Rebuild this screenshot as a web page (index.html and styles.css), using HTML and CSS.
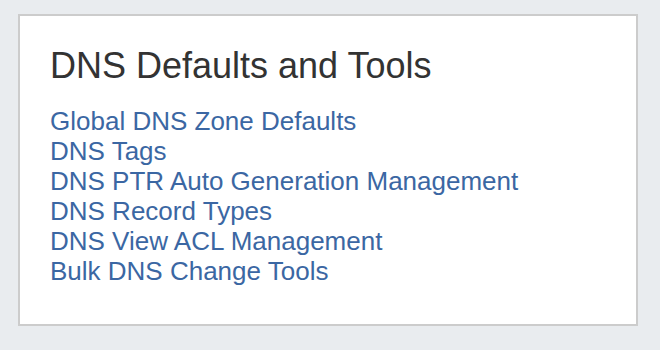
FILE: index.html
```html
<!DOCTYPE html>
<html lang="en">
<head>
    <meta charset="UTF-8" />
    <title>DNS Defaults and Tools</title>
    <link rel="stylesheet" href="styles.css">
</head>
<body>
    <div class="panel">
        <h2 class="panel-title">DNS Defaults and Tools</h2>
        <ul class="tool-links">
            <li><a href="#">Global DNS Zone Defaults</a></li>
            <li><a href="#">DNS Tags</a></li>
            <li><a href="#">DNS PTR Auto Generation Management</a></li>
            <li><a href="#">DNS Record Types</a></li>
            <li><a href="#">DNS View ACL Management</a></li>
            <li><a href="#">Bulk DNS Change Tools</a></li>
        </ul>
    </div>
</body>
</html>
```

FILE: styles.css
```css
body {
    margin: 0;
    padding: 14px 22px 24px 18px;
    background-color: #e9ecef;
    font-family: 'Liberation Sans', Arial, sans-serif;
}

.panel {
    background-color: #fff;
    border: 2px solid #cccccc;
    padding: 30px 30px 36px 30px;
    box-sizing: border-box;
    height: 312px;
}

.panel-title {
    margin: 0 0 20px;
    font-size: 36px;
    font-weight: normal;
    line-height: 40px;
    color: #333;
}

.tool-links {
    list-style: none;
    margin: 0;
    padding: 0;
}

.tool-links li {
    font-size: 26px;
    line-height: 30px;
}

.tool-links a {
    color: #3b67a3;
    text-decoration: none;
}
```
